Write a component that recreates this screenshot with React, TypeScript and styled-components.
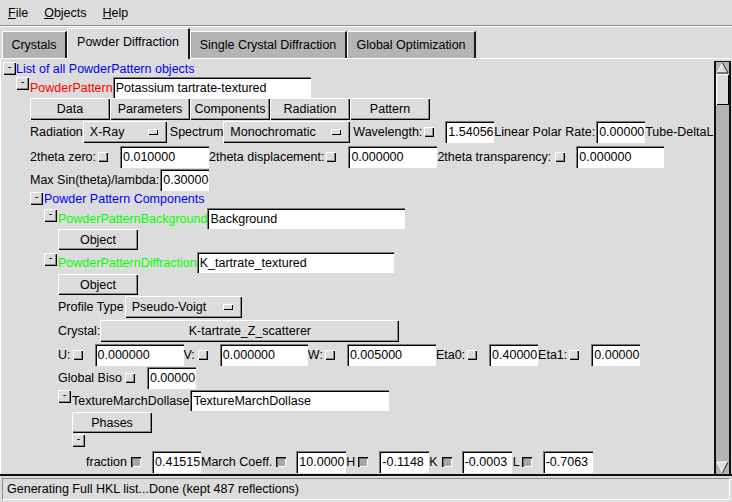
import styled, { createGlobalStyle } from "styled-components";

const BG = "#dcdcdc";
const TAB_OFF = "#b4b4b4";

const GlobalStyle = createGlobalStyle`
  html, body {
    margin: 0;
    padding: 0;
    background: ${BG};
  }
  body {
    font-family: "Liberation Sans", Arial, sans-serif;
    font-size: 12.5px;
    color: #000;
  }
`;

const Window = styled.div`
  width: 732px;
  height: 502px;
  display: flex;
  flex-direction: column;
  background: ${BG};
  overflow: hidden;
`;

/* ---------- menu ---------- */

const MenuBar = styled.div`
  height: 25px;
  display: flex;
  align-items: center;
  border-bottom: 1px solid #8c8c8c;
  box-shadow: 0 1px 0 #fff;
  flex-shrink: 0;
`;

const MenuItem = styled.span`
  padding: 0 8px;
`;

const Mnemonic = styled.span`
  text-decoration: underline;
`;

/* ---------- tabs ---------- */

const TabBar = styled.div`
  margin-top: 2px;
  height: 30px;
  display: flex;
  align-items: flex-end;
  padding-left: 2px;
  border-bottom: 1px solid #fff;
  flex-shrink: 0;
`;

const Tab = styled.div<{ $w: number; $active?: boolean }>`
  position: relative;
  width: ${(p) => p.$w}px;
  height: ${(p) => (p.$active ? 31 : 27)}px;
  margin-bottom: ${(p) => (p.$active ? -1 : 0)}px;
  box-sizing: border-box;
  background: ${(p) => (p.$active ? BG : TAB_OFF)};
  border-left: 1px solid #fff;
  border-top: 1px solid #fff;
  border-right: 2px solid #1a1a1a;
  display: flex;
  align-items: center;
  justify-content: center;
  padding-bottom: ${(p) => (p.$active ? 4 : 1)}px;
  z-index: ${(p) => (p.$active ? 1 : 0)};
`;

/* ---------- main panel ---------- */

const Panel = styled.div`
  height: 415px;
  display: flex;
  border-bottom: 2px solid #111;
  box-shadow: inset 1px 0 0 #fff;
  flex-shrink: 0;
`;

const Content = styled.div`
  flex: 1;
  overflow: hidden;
  display: flex;
  flex-direction: column;
  padding-top: 1px;
`;

const Row = styled.div<{ $indent: number; $mt?: number; $h: number }>`
  display: flex;
  align-items: center;
  flex-shrink: 0;
  height: ${(p) => p.$h}px;
  margin-top: ${(p) => p.$mt ?? 0}px;
  padding-left: ${(p) => p.$indent}px;
  white-space: nowrap;
`;

const Toggle = styled.span<{ $mt?: number }>`
  align-self: flex-start;
  margin-top: ${(p) => p.$mt ?? 0}px;
  width: 13px;
  height: 13px;
  box-sizing: border-box;
  flex-shrink: 0;
  background: ${BG};
  box-shadow: inset 1px 1px 0 #fff, inset -1px -1px 0 #000, inset -2px -2px 0 #8c8c8c;
  display: flex;
  justify-content: center;
  font-size: 11px;
  line-height: 9px;
`;

const Label = styled.span<{ $ml?: number; $color?: string }>`
  margin-left: ${(p) => p.$ml ?? 0}px;
  color: ${(p) => p.$color ?? "#000"};
  flex-shrink: 0;
`;

const Field = styled.div<{ $w: number; $ml?: number }>`
  width: ${(p) => p.$w}px;
  height: 100%;
  margin-left: ${(p) => p.$ml ?? 0}px;
  box-sizing: border-box;
  flex-shrink: 0;
  background: #fff;
  box-shadow: inset 1px 1px 0 #7a7a7a, inset 2px 2px 0 #000;
  padding-left: 3px;
  display: flex;
  align-items: center;
  overflow: hidden;
`;

const Check = styled.span<{ $ml?: number; $mr?: number; $on?: boolean }>`
  width: 10px;
  height: 10px;
  margin-left: ${(p) => p.$ml ?? 3}px;
  margin-right: ${(p) => p.$mr ?? 12}px;
  box-sizing: border-box;
  flex-shrink: 0;
  background: ${(p) => (p.$on ? "#a8a8a8" : BG)};
  box-shadow: ${(p) =>
    p.$on
      ? "inset 1px 1px 0 #000, inset 2px 2px 0 #6e6e6e, inset -1px -1px 0 #fff"
      : "inset 1px 1px 0 #fff, inset -1px -1px 0 #000, inset -2px -2px 0 #8c8c8c"};
`;

const PushButton = styled.div<{ $w: number; $ml?: number }>`
  width: ${(p) => p.$w}px;
  height: 100%;
  margin-left: ${(p) => p.$ml ?? 0}px;
  box-sizing: border-box;
  flex-shrink: 0;
  background: ${BG};
  box-shadow: inset 1px 1px 0 #fff, inset -1px -1px 0 #000, inset -2px -2px 0 #8c8c8c;
  display: flex;
  align-items: center;
  justify-content: center;
`;

const OptionMenu = styled.div<{ $w: number; $ml?: number }>`
  width: ${(p) => p.$w}px;
  height: 100%;
  margin-left: ${(p) => p.$ml ?? 0}px;
  box-sizing: border-box;
  flex-shrink: 0;
  background: ${BG};
  box-shadow: inset 1px 1px 0 #fff, inset -1px -1px 0 #000, inset -2px -2px 0 #8c8c8c;
  display: flex;
  align-items: center;
  padding: 0 9px 0 7px;
`;

const Indicator = styled.span`
  margin-left: auto;
  width: 10px;
  height: 6px;
  box-sizing: border-box;
  background: ${BG};
  box-shadow: inset 1px 1px 0 #fff, inset -1px -1px 0 #000;
`;

/* ---------- scrollbar ---------- */

const ScrollTrack = styled.div`
  width: 17px;
  margin: 2px 1px 0 0;
  box-sizing: border-box;
  background: ${TAB_OFF};
  border-left: 2px solid #111;
  border-top: 1px solid #111;
  border-right: 2px solid #111;
  display: flex;
  flex-direction: column;
  flex-shrink: 0;
`;

const Thumb = styled.div`
  height: 31px;
  background: ${BG};
  box-shadow: inset 1px 1px 0 #fff, inset -1px -1px 0 #000;
`;

const TrackFill = styled.div`
  flex: 1;
`;

const UpArrow = () => (
  <svg width="13" height="12" viewBox="0 0 13 12" style={{ display: "block" }}>
    <polygon points="6.5,1 12,11 1,11" fill={BG} />
    <polyline points="1,11 6.5,1" fill="none" stroke="#fff" strokeWidth="1" />
    <polyline points="6.5,1 12,11 1,11" fill="none" stroke="#222" strokeWidth="1" />
  </svg>
);

const DownArrow = () => (
  <svg width="13" height="14" viewBox="0 0 13 14" style={{ display: "block" }}>
    <polygon points="1,2 12,2 6.5,13" fill={BG} />
    <polyline points="6.5,13 1,2 12,2" fill="none" stroke="#fff" strokeWidth="1" />
    <polyline points="12,2 6.5,13" fill="none" stroke="#222" strokeWidth="1" />
  </svg>
);

/* ---------- status ---------- */

const StatusBar = styled.div`
  height: 22px;
  margin: 2px;
  box-sizing: border-box;
  border-top: 1px solid #8c8c8c;
  border-left: 1px solid #8c8c8c;
  border-bottom: 1px solid #fff;
  border-right: 1px solid #fff;
  display: flex;
  align-items: center;
  padding-left: 4px;
  flex-shrink: 0;
`;

// label + small toggle square + value box
const Param = ({
  label,
  value,
  w,
  ml = 0,
  checkMl = 3,
  gap = 12,
  on,
}: {
  label: string;
  value: string;
  w: number;
  ml?: number;
  checkMl?: number;
  gap?: number;
  on?: boolean;
}) => (
  <>
    <Label $ml={ml}>{label}</Label>
    <Check $ml={checkMl} $mr={gap} $on={on} />
    <Field $w={w}>{value}</Field>
  </>
);

export default function App() {
  return (
    <Window>
      <GlobalStyle />
      <MenuBar>
        <MenuItem>
          <Mnemonic>F</Mnemonic>ile
        </MenuItem>
        <MenuItem>
          <Mnemonic>O</Mnemonic>bjects
        </MenuItem>
        <MenuItem>
          <Mnemonic>H</Mnemonic>elp
        </MenuItem>
      </MenuBar>

      <TabBar>
        <Tab $w={65}>Crystals</Tab>
        <Tab $w={123} $active>
          Powder Diffraction
        </Tab>
        <Tab $w={157}>Single Crystal Diffraction</Tab>
        <Tab $w={129}>Global Optimization</Tab>
      </TabBar>

      <Panel>
        <Content>
          <Row $indent={3} $mt={1} $h={15}>
            <Toggle $mt={1}>-</Toggle>
            <Label $color="#0000ff">List of all PowderPattern objects</Label>
          </Row>

          <Row $indent={16} $mt={1} $h={21}>
            <Toggle>-</Toggle>
            <Label $ml={1} $color="#ff0000">PowderPattern</Label>
            <Field $w={198}>Potassium tartrate-textured</Field>
          </Row>

          <Row $indent={30} $h={22}>
            <PushButton $w={80}>Data</PushButton>
            <PushButton $w={80}>Parameters</PushButton>
            <PushButton $w={80}>Components</PushButton>
            <PushButton $w={80}>Radiation</PushButton>
            <PushButton $w={80}>Pattern</PushButton>
          </Row>

          <Row $indent={30} $mt={1} $h={22}>
            <Label>Radiation</Label>
            <OptionMenu $w={84}>
              X-Ray
              <Indicator />
            </OptionMenu>
            <Label $ml={3}>Spectrum</Label>
            <OptionMenu $w={127}>
              Monochromatic
              <Indicator />
            </OptionMenu>
            <Param label="Wavelength:" value="1.54056" w={49} ml={3} checkMl={2} gap={11} />
            <Label>Linear Polar Rate:</Label>
            <Field $w={49} $ml={1}>0.00000</Field>
            <Label>Tube-DeltaL</Label>
          </Row>

          <Row $indent={30} $mt={3} $h={22}>
            <Param label="2theta zero:" value="0.010000" w={89} checkMl={2} />
            <Param label="2theta displacement:" value="0.000000" w={89} checkMl={2} />
            <Param label="2theta transparency:" value="0.000000" w={88} checkMl={4} gap={11} />
          </Row>

          <Row $indent={30} $mt={1} $h={22}>
            <Label>Max Sin(theta)/lambda:</Label>
            <Field $w={49} $ml={1}>0.30000</Field>
          </Row>

          <Row $indent={30} $mt={1} $h={13}>
            <Toggle>-</Toggle>
            <Label $ml={1} $color="#0000ff">Powder Pattern Components</Label>
          </Row>

          <Row $indent={44} $mt={3} $h={21}>
            <Toggle $mt={1}>-</Toggle>
            <Label $ml={1} $color="#00ff00">PowderPatternBackground</Label>
            <Field $w={198}>Background</Field>
          </Row>

          <Row $indent={58} $h={21}>
            <PushButton $w={80}>Object</PushButton>
          </Row>

          <Row $indent={44} $mt={2} $h={21}>
            <Toggle $mt={1}>-</Toggle>
            <Label $ml={1} $color="#00ff00">PowderPatternDiffraction</Label>
            <Field $w={197}>K_tartrate_textured</Field>
          </Row>

          <Row $indent={58} $mt={1} $h={21}>
            <PushButton $w={80}>Object</PushButton>
          </Row>

          <Row $indent={58} $mt={1} $h={22}>
            <Label>Profile Type</Label>
            <OptionMenu $w={117} $ml={1}>
              Pseudo-Voigt
              <Indicator />
            </OptionMenu>
          </Row>

          <Row $indent={58} $mt={2} $h={22}>
            <Label>Crystal:</Label>
            <PushButton $w={299}>K-tartrate_Z_scatterer</PushButton>
          </Row>

          <Row $indent={58} $mt={2} $h={22}>
            <Param label="U:" value="0.000000" w={89} checkMl={2} />
            <Param label="V:" value="0.000000" w={88} checkMl={3} />
            <Param label="W:" value="0.005000" w={89} checkMl={2} />
            <Param label="Eta0:" value="0.40000" w={49} checkMl={2} />
            <Param label="Eta1:" value="0.00000" w={49} checkMl={2} />
          </Row>

          <Row $indent={58} $mt={1} $h={22}>
            <Param label="Global Biso" value="0.00000" w={49} checkMl={3} />
          </Row>

          <Row $indent={58} $mt={1} $h={21}>
            <Toggle>-</Toggle>
            <Label $ml={1}>TextureMarchDollase</Label>
            <Field $w={199} $ml={1}>TextureMarchDollase</Field>
          </Row>

          <Row $indent={72} $mt={1} $h={21}>
            <PushButton $w={80}>Phases</PushButton>
          </Row>

          <Row $indent={72} $mt={1} $h={13}>
            <Toggle>-</Toggle>
          </Row>

          <Row $indent={86} $mt={4} $h={22}>
            <Param label="fraction" value="0.41515" w={49} checkMl={4} gap={11} on />
            <Param label="March Coeff." value="10.0000" w={50} checkMl={4} gap={10} on />
            <Param label="H" value="-0.1148" w={50} checkMl={3} gap={11} on />
            <Param label="K" value="-0.0003" w={50} checkMl={4} gap={10} on />
            <Param label="L" value="-0.7063" w={50} ml={1} checkMl={2} gap={11} on />
          </Row>
        </Content>

        <ScrollTrack>
          <UpArrow />
          <Thumb />
          <TrackFill />
          <DownArrow />
        </ScrollTrack>
      </Panel>

      <StatusBar>Generating Full HKL list...Done (kept 487 reflections)</StatusBar>
    </Window>
  );
}
